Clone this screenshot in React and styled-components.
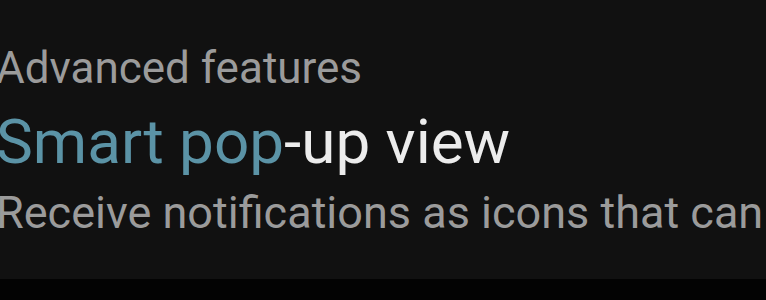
import React from 'react';
import styled, { createGlobalStyle } from 'styled-components';

const GlobalStyle = createGlobalStyle`
    html, body {
        margin: 0;
        padding: 0;
        background-color: #030303;
    }
    body {
        font-family: Roboto, "Noto Sans", sans-serif;
        overflow: hidden;
    }
`;

const Panel = styled.section`
    height: 279px;
    box-sizing: border-box;
    padding-top: 43px;
    background-color: #111111;
    overflow: hidden;
`;

const Content = styled.div`
    display: flex;
    flex-direction: column;
    margin-left: -4px;
    white-space: nowrap;
`;

const Category = styled.div`
    font-size: 44px;
    line-height: 50px;
    color: #9b9b9b;
`;

const Title = styled.div`
    margin-top: 14px;
    font-size: 62px;
    line-height: 70px;
    color: #ececec;
    span {
        color: #5b93a6;
    }
`;

const Summary = styled.div`
    margin-top: 11px;
    font-size: 45px;
    line-height: 50px;
    color: #9b9b9b;
`;

export default function App() {
    return (
        <>
            <GlobalStyle />
            <Panel>
                <Content>
                    <Category>Advanced features</Category>
                    <Title><span>Smart pop</span>-up view</Title>
                    <Summary>Receive notifications as icons that can</Summary>
                </Content>
            </Panel>
        </>
    );
}
